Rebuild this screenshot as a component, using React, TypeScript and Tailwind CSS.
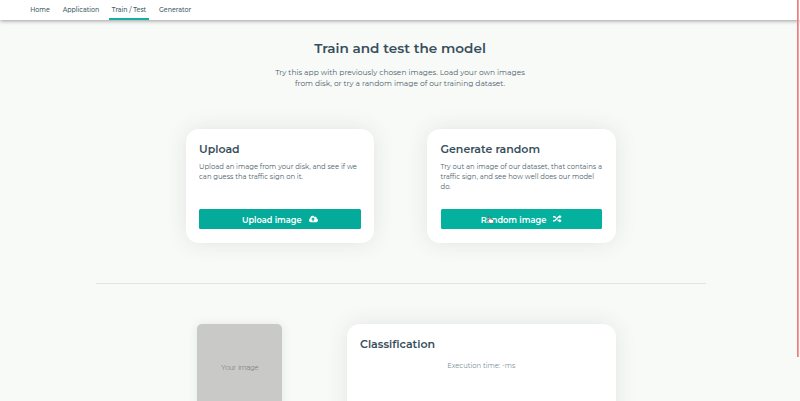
import type { ReactNode } from "react";
import { FaCloudUploadAlt, FaRandom } from "react-icons/fa";

const navLinks = [
  { label: "Home", active: false, box: "w-[26px]" },
  { label: "Application", active: false, box: "w-[43px]" },
  { label: "Train / Test", active: true, box: "w-[40px]" },
  { label: "Generator", active: false, box: "w-[39px]" },
];

function Navbar() {
  return (
    <nav className="relative flex h-[19.5px] shrink-0 gap-[6.5px] bg-white pl-[27px] shadow-[0_1px_4px_rgba(0,0,0,0.38)]">
      {navLinks.map((link) => (
        <a
          key={link.label}
          className={`flex h-full justify-center border-b-2 pt-[5px] text-[6.3px] leading-[10px] font-medium whitespace-nowrap text-[#435a66] ${link.box} ${
            link.active ? "border-[#12b09f]" : "border-transparent"
          }`}
        >
          {link.label}
        </a>
      ))}
    </nav>
  );
}

function Card({ className, children }: { className: string; children: ReactNode }) {
  return (
    <section className={`flex flex-col rounded-[13px] bg-white px-[13.5px] shadow-[0_0_22px_rgba(40,60,50,0.11)] ${className}`}>
      {children}
    </section>
  );
}

function CardTitle({ children }: { children: ReactNode }) {
  return <h2 className="text-[11px] leading-[14px] font-semibold whitespace-nowrap text-[#374e5b]">{children}</h2>;
}

function ActionButton({ className, children }: { className: string; children: ReactNode }) {
  return (
    <button className={`mt-auto flex h-5 w-full items-center justify-center rounded-[1.5px] pt-[2px] text-[8.25px] font-semibold text-white ${className}`}>
      {children}
    </button>
  );
}

function HandCursor() {
  return (
    <svg className="absolute top-[7px] left-[46.5px] h-[8px] w-[8px]" viewBox="0 0 14 14">
      <path
        d="M3 1.5c0-1 2-1 2 0v4c1-.8 2-.5 2 .2 1-.6 2-.3 2 .4 1-.4 2.5 0 2.5 1V10l-1.5 3H5L1.2 8.3c-.7-1 .5-1.8 1.8-.8z"
        fill="#fff"
        stroke="#3b3030"
        strokeWidth="1"
      />
    </svg>
  );
}

export default function App() {
  return (
    <div className="relative flex h-[401px] w-[800px] flex-col overflow-hidden bg-[#f8faf8] font-['Montserrat','Inter',sans-serif]">
      <Navbar />
      <header className="flex flex-col items-center pt-[19px]">
        <h1 className="text-[13.6px] leading-[18px] font-semibold whitespace-nowrap text-[#374e5b]">
          Train and test the model
        </h1>
        <p className="mt-[10px] text-center text-[7.5px] leading-[11px] whitespace-nowrap text-[#4c626d]">
          Try this app with previously chosen images. Load your own images
          <br />
          from disk, or try a random image of our training dataset.
        </p>
      </header>

      <main className="flex flex-col">
        <div className="mt-[40.5px] ml-[185.5px] flex gap-[53px]">
          <Card className="h-[114px] w-[188.5px] pt-[13px] pb-[13.6px]">
            <CardTitle>Upload</CardTitle>
            <p className="mt-[6px] text-[6.85px] leading-[10px] whitespace-nowrap text-[#4c626d]">
              Upload an image from your disk, and see if we
              <br />
              can guess tha traffic sign on it.
            </p>
            <ActionButton className="gap-[7px] bg-[#04ab9b]">
              Upload image
              <FaCloudUploadAlt className="h-[9px] w-[9px] -translate-y-[1.5px]" />
            </ActionButton>
          </Card>
          <Card className="h-[114px] w-[188.5px] pt-[13px] pb-[13.6px]">
            <CardTitle>Generate random</CardTitle>
            <p className="mt-[6px] text-[6.85px] leading-[10px] whitespace-nowrap text-[#4c626d]">
              Try out an image of our dataset, that contains a
              <br />
              traffic sign, and see how well does our model
              <br />
              do.
            </p>
            <ActionButton className="relative gap-[7px] bg-[#04b19f]">
              Random image
              <FaRandom className="h-[8.5px] w-[8.5px] -translate-y-[1.5px]" />
              <HandCursor />
            </ActionButton>
          </Card>
        </div>

        <hr className="mt-[40px] ml-24 w-[610px] border-t border-[#e1e4e2]" />

        <div className="mt-[40px] ml-[197px] flex">
          <div className="flex h-[88px] w-[85px] justify-center rounded-[5px] bg-[#c9c9c8] pt-[39px] font-['Roboto',sans-serif] text-[8px] leading-[10px] font-light tracking-[-0.4px] [word-spacing:1px] text-[#808080] shadow-[0_0_10px_rgba(40,60,50,0.10)]">
            Your image
          </div>
          <Card className="ml-[64.5px] h-[120px] w-[269.5px] pt-[13px]">
            <CardTitle>Classification</CardTitle>
            <p className="mt-[9.5px] text-center text-[6.8px] leading-[10px] text-[#7c8f98]">
              Execution time: -ms
            </p>
          </Card>
        </div>
      </main>

      <div className="absolute top-0 right-px h-[357px] w-[2px] border-l border-[#e87d80] bg-[#ff9c9c]" />
    </div>
  );
}
